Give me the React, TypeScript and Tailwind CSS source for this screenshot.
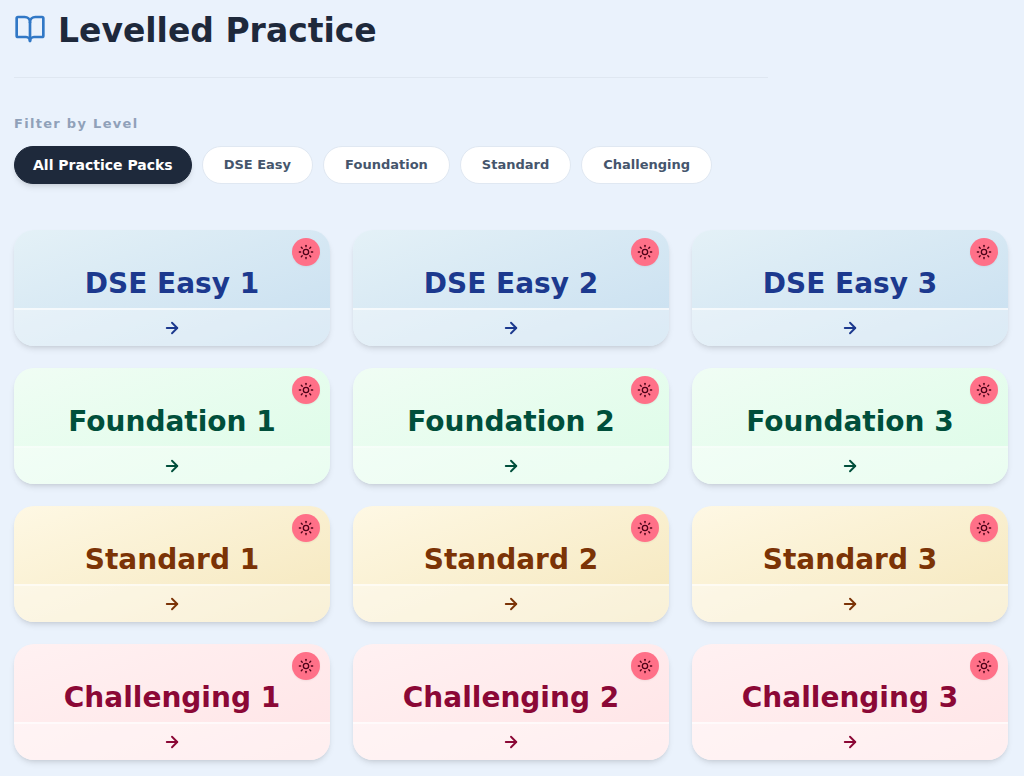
import { useState } from "react";
import { ArrowRight, BookOpen, Sun } from "lucide-react";

const FILTERS = ["All Practice Packs", "DSE Easy", "Foundation", "Standard", "Challenging"];

const LEVELS = [
  {
    name: "DSE Easy",
    card: "from-[#e4f1f7] to-[#c8dff0]",
    text: "text-[#1c398e]",
    footer: "bg-white/35 border-white/60",
  },
  {
    name: "Foundation",
    card: "from-[#f0fdf4] to-[#dcfce7]",
    text: "text-[#004f3b]",
    footer: "bg-white/40 border-white/30",
  },
  {
    name: "Standard",
    card: "from-[#fef8e4] to-[#f5e7bc]",
    text: "text-[#7b3306]",
    footer: "bg-white/40 border-white/50",
  },
  {
    name: "Challenging",
    card: "from-[#fff1f2] to-[#ffe4e6]",
    text: "text-[#8b0836]",
    footer: "bg-white/40 border-white/60",
  },
];

type Level = (typeof LEVELS)[number];

function PackCard({ level, number }: { level: Level; number: number }) {
  return (
    <a
      href="#"
      className={`relative flex flex-col overflow-hidden rounded-[20px] bg-linear-to-br shadow-md ${level.card} ${level.text}`}
    >
      <span className="absolute top-2 right-[10px] flex size-7 items-center justify-center rounded-full bg-[#ff7088] text-[#4d0218] shadow-xs">
        <Sun size={16} />
      </span>
      <h2 className="pt-[35px] pb-[5px] text-center text-[28px] leading-[38px] font-bold">
        {level.name} {number}
      </h2>
      <div className={`flex justify-center border-t-2 py-[9px] ${level.footer}`}>
        <ArrowRight size={18} strokeWidth={2.5} />
      </div>
    </a>
  );
}

export default function App() {
  const [active, setActive] = useState(FILTERS[0]);
  const levels = LEVELS.filter((l) => active === FILTERS[0] || l.name === active);

  return (
    <div className="min-h-screen bg-[#eaf2fc] pt-2 pr-4 pb-4 pl-[14px] font-['Verdana','DejaVu_Sans',sans-serif]">
      {/* Header */}
      <header className="flex max-w-[754px] items-start gap-3 border-b border-[#dfe7f1] pb-[23px]">
        <BookOpen size={32} className="mt-[5px] text-[#3178c6]" />
        <h1 className="text-[33px] leading-[46px] font-bold text-[#1e293b]">Levelled Practice</h1>
      </header>

      {/* Level filter */}
      <section className="pt-9">
        <p className="text-[13px] leading-5 font-bold tracking-widest text-[#90a1b9]">Filter by Level</p>
        <div className="mt-3 flex flex-wrap gap-[10px]">
          {FILTERS.map((filter) => (
            <button
              key={filter}
              type="button"
              onClick={() => setActive(filter)}
              className={`rounded-full border py-2 leading-5 font-bold ${
                active === filter
                  ? "border-[#1e293b] bg-[#1e293b] px-[18px] text-sm text-white shadow-md"
                  : "border-[#e0e8f2] bg-white px-[21px] text-[13px] text-[#45556c]"
              }`}
            >
              {filter}
            </button>
          ))}
        </div>
      </section>

      {/* Practice packs */}
      <main className="mt-[46px] grid grid-cols-3 gap-x-[23px] gap-y-[22px]">
        {levels.map((level) =>
          [1, 2, 3].map((n) => <PackCard key={`${level.name}-${n}`} level={level} number={n} />)
        )}
      </main>
    </div>
  );
}
